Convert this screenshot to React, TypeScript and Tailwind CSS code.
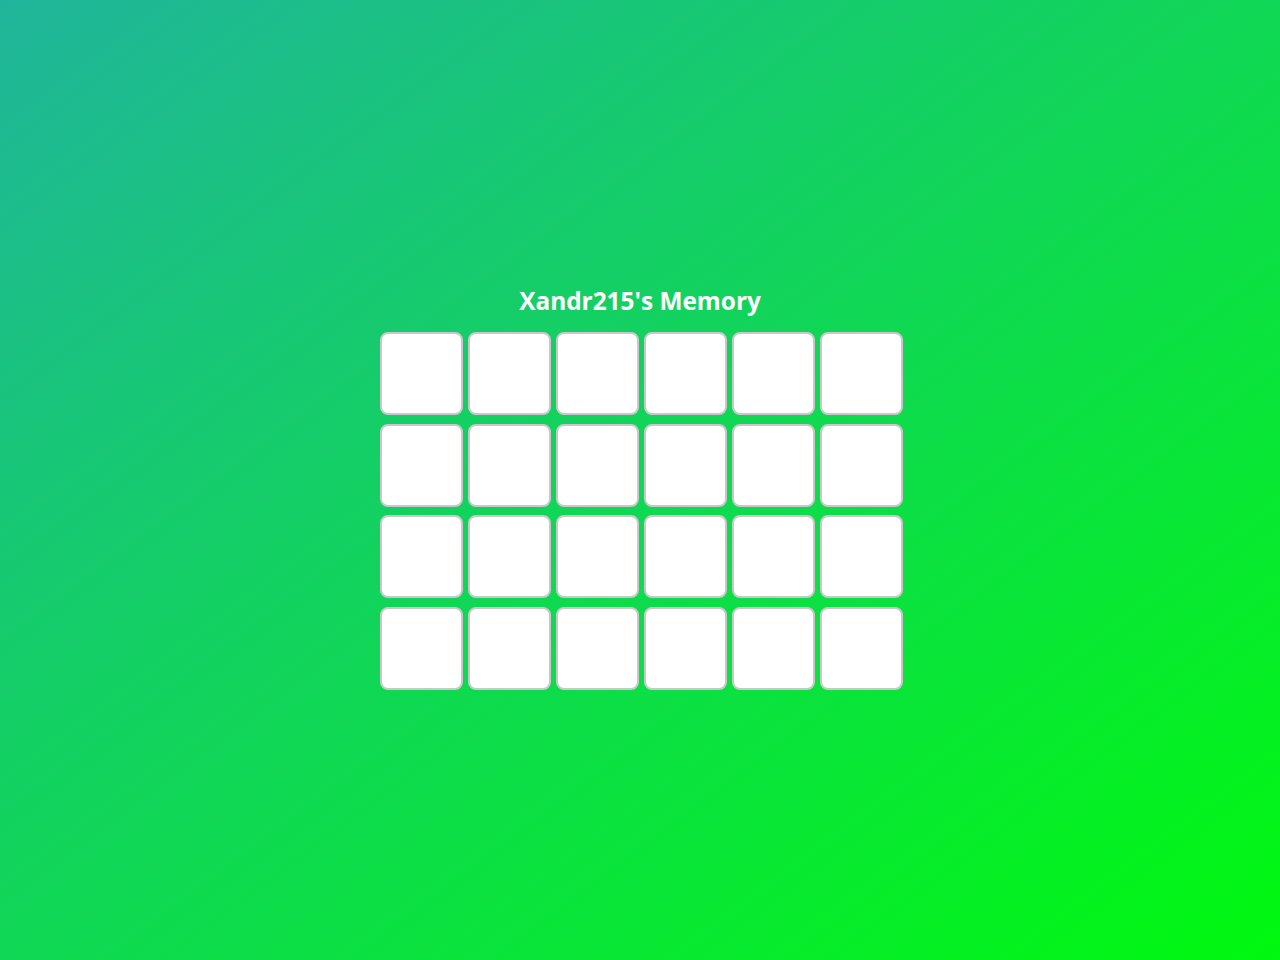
import React from 'react';

const cards = Array.from({ length: 24 }, (_, i) => i);

export default function App() {
  return (
    <div className="flex min-h-screen w-full flex-col items-center justify-center bg-[linear-gradient(to_bottom_right,#20b59b,#00f90f)] pt-[15px] font-['Open_Sans',sans-serif]">
      <h1 className="mb-[15px] h-8 text-[24.4px] font-bold leading-8 text-white">Xandr215's Memory</h1>
      <div className="ml-[3px] grid grid-cols-6 gap-x-[5.2px] gap-y-[8.7px]">
        {cards.map((i) => (
          <div key={i} className="h-[83px] w-[83px] rounded-[8px] border-2 border-[#cbc6cb] bg-white" />
        ))}
      </div>
    </div>
  );
}
